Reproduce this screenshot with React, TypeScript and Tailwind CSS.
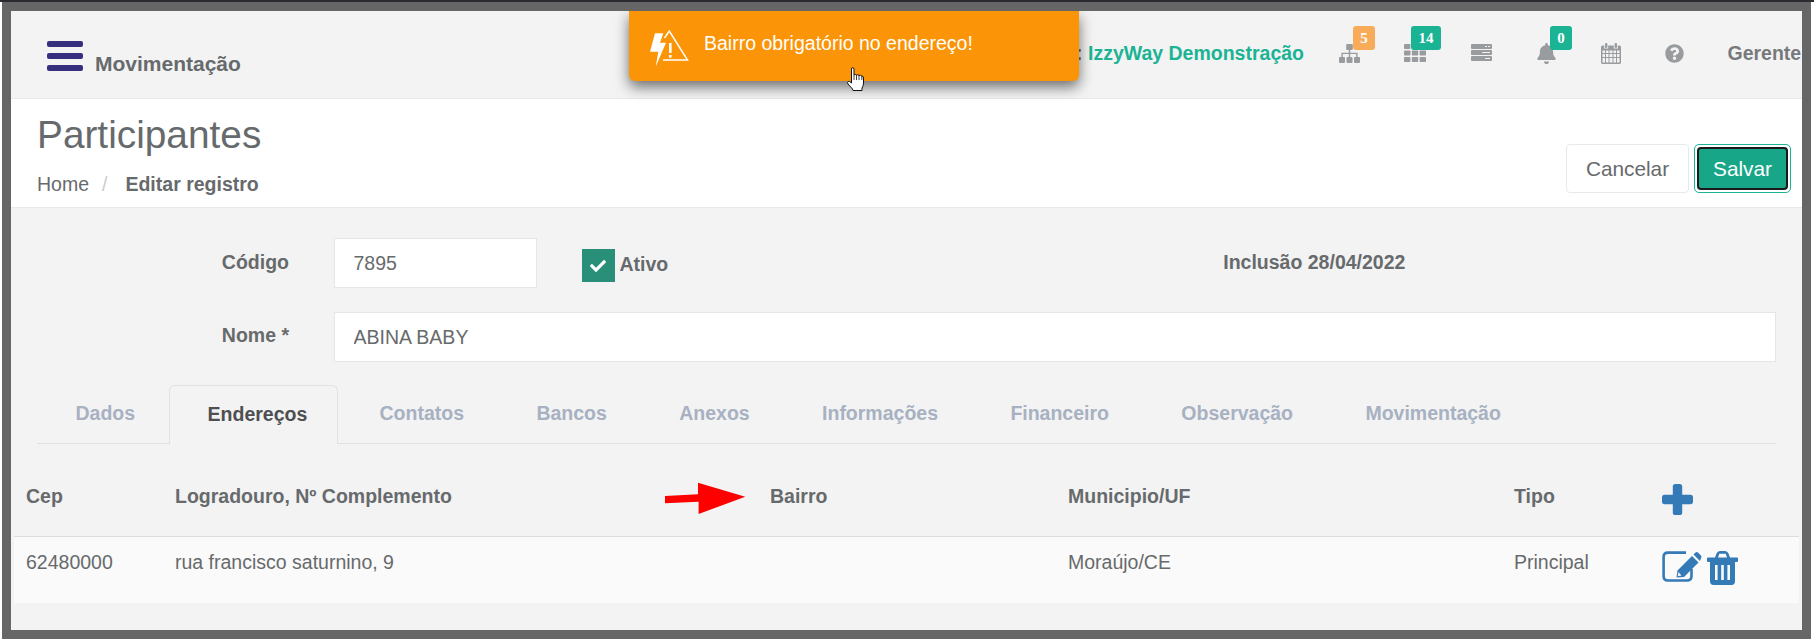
import React from "react";
import { FaBell, FaQuestionCircle } from "react-icons/fa";
import { FaCheck } from "react-icons/fa";

const Sitemap = () => (
  <svg width="21" height="19" viewBox="0 0 21 19" fill="#999c9e">
    <rect x="7.2" y="0" width="6.6" height="6" rx="1" />
    <rect x="9.8" y="6" width="1.4" height="7" />
    <path d="M2.4 13V8.7h16.2V13h-1.4V10H3.8v3z" />
    <rect x="0" y="13" width="6" height="6" rx="1" />
    <rect x="7.5" y="13" width="6" height="6" rx="1" />
    <rect x="15" y="13" width="6" height="6" rx="1" />
  </svg>
);

const Grid = () => (
  <svg width="22" height="18" viewBox="0 0 22 18" fill="#999c9e">
    {[0, 6.5, 13].map((y) =>
      [0, 7.8, 15.6].map((x) => <rect key={`${x}-${y}`} x={x} y={y} width="6.4" height="5" rx="0.8" />)
    )}
  </svg>
);

const Server = () => (
  <svg width="21" height="17" viewBox="0 0 21 17" fill="#999c9e">
    <path fillRule="evenodd" d="M0 1a1 1 0 0 1 1-1h19a1 1 0 0 1 1 1v3a1 1 0 0 1-1 1H1a1 1 0 0 1-1-1zm14 1v1h2V2zm3 0v1h2V2z" />
    <path fillRule="evenodd" d="M0 7a1 1 0 0 1 1-1h19a1 1 0 0 1 1 1v3a1 1 0 0 1-1 1H1a1 1 0 0 1-1-1zm11 1v1h8V8z" />
    <path fillRule="evenodd" d="M0 13a1 1 0 0 1 1-1h19a1 1 0 0 1 1 1v3a1 1 0 0 1-1 1H1a1 1 0 0 1-1-1zm14 1v1h5v-1z" />
  </svg>
);

const Calendar = () => (
  <svg width="20" height="21" viewBox="0 0 20 21" fill="#999c9e">
    <rect x="4" y="0" width="2.4" height="5" rx="1" />
    <rect x="13.6" y="0" width="2.4" height="5" rx="1" />
    <path
      fillRule="evenodd"
      d="M1.5 2.5H3.2V5.5H7.2V2.5H12.8V5.5H16.8V2.5H18.5A1.5 1.5 0 0 1 20 4V19.5A1.5 1.5 0 0 1 18.5 21H1.5A1.5 1.5 0 0 1 0 19.5V4A1.5 1.5 0 0 1 1.5 2.5ZM1.5 7.5V10H4V7.5ZM5 7.5V10H7.5V7.5ZM8.5 7.5V10H11.5V7.5ZM12.5 7.5V10H15V7.5ZM16 7.5V10H18.5V7.5ZM1.5 11V14H4V11ZM5 11V14H7.5V11ZM8.5 11V14H11.5V11ZM12.5 11V14H15V11ZM16 11V14H18.5V11ZM1.5 15V19.5H4V15ZM5 15V19.5H7.5V15ZM8.5 15V19.5H11.5V15ZM12.5 15V19.5H15V15ZM16 15V19.5H18.5V15Z"
    />
  </svg>
);

const Plus = () => (
  <svg width="31" height="31" viewBox="0 0 31 31" fill="#337ab7">
    <rect x="0" y="10.8" width="31" height="9.4" rx="2.6" />
    <rect x="10.8" y="0" width="9.4" height="31" rx="2.6" />
  </svg>
);

const Edit = () => (
  <svg width="40" height="31" viewBox="0 0 40 31" fill="#337ab7">
    <path d="M24 1.6H6Q1.6 1.6 1.6 6V25Q1.6 29.5 6 29.5H25Q29.5 29.5 29.5 25V18" fill="none" stroke="#337ab7" strokeWidth="2.6" />
    <polygon points="14.5,26.5 15.5,19.5 30,5 36.5,11.5 22,26" />
    <path d="M31.5 3.5L33.5 1.5Q35 .5 36 1.5L39 4.5Q40 5.5 39 7L38 10Z" />
    <polygon points="16.5,21 19.4,24.4 15.8,25.2" fill="#fafafa" />
  </svg>
);

const Trash = () => (
  <svg width="31" height="34" viewBox="0 0 31 34" fill="#337ab7">
    <path
      fillRule="evenodd"
      d="M8 6.5 L9.5 2.5 Q10.5 0 13 0 H18 Q20.5 0 21.5 2.5 L23 6.5 H30 Q31 6.5 31 7.5 V10 Q31 11 30 11 H28 V30 Q28 34 24.5 34 H6.5 Q3 34 3 30 V11 H1 Q0 11 0 10 V7.5 Q0 6.5 1 6.5 Z M11 6.5 H20 L18.7 2.8 H12.3 Z M8 14 V29 H10.6 V14 Z M14.2 14 V29 H16.8 V14 Z M20.4 14 V29 H23 V14 Z"
    />
  </svg>
);

const Badge = ({ text, left, color, width }: { text: string; left: string; color: string; width: string }) => (
  <span
    className={`absolute top-[15px] ${left} ${width} ${color} flex h-6 items-center justify-center rounded-[3px] font-['Liberation_Serif',serif] text-[15px] font-bold text-white`}
  >
    {text}
  </span>
);

const tabs = ["Dados", "Endereços", "Contatos", "Bancos", "Anexos", "Informações", "Financeiro", "Observação", "Movimentação"];

export default function App() {
  return (
    <div className="flex h-[639px] w-[1814px] flex-col overflow-hidden bg-white pl-[2px] pr-[3px] font-['Liberation_Sans',Arial,sans-serif] text-[19.5px] text-[#676a6c]">
      <div className="-ml-[2px] -mr-[3px] h-[2px] flex-none bg-[#2a2a2f]" />
      <div className="relative flex-1 overflow-hidden border-[9px] border-[#666666] bg-[#f3f3f3]">
        {/* top bar */}
        <header className="flex h-[88px] items-start border-b border-[#e7eaec] bg-[#f3f3f3]">
          <div className="flex w-[1050px] flex-none items-end pl-9 pt-[30px]">
            <div className="flex flex-col gap-[6px]">
              <span className="h-[6px] w-9 rounded-[2px] bg-[#352f7e]" />
              <span className="h-[6px] w-9 rounded-[2px] bg-[#352f7e]" />
              <span className="h-[6px] w-9 rounded-[2px] bg-[#352f7e]" />
            </div>
            <span className="-mb-[4px] ml-3 text-[21px] font-bold leading-[22px] text-[#676a6c]">Movimentação</span>
          </div>
          <div className="w-[243px] flex-none whitespace-nowrap pt-[31px] text-right font-bold leading-[22px] text-[#1ab394]">
            <span className="text-[#676a6c]">: </span>IzzyWay Demonstração
          </div>
          <div className="relative ml-[13px] flex h-[87px] w-[65.5px] flex-none justify-center pt-[33px]">
            <Sitemap />
            <Badge text="5" left="left-[36px]" width="w-[22px]" color="bg-[#f8ac59]" />
          </div>
          <div className="relative flex h-[87px] w-[65.5px] flex-none justify-center pt-[33px]">
            <Grid />
            <Badge text="14" left="left-[28.5px]" width="w-[30px]" color="bg-[#1ab394]" />
          </div>
          <div className="flex h-[87px] w-[66.5px] flex-none justify-center pt-[33px]">
            <Server />
          </div>
          <div className="relative flex h-[87px] w-[64.5px] flex-none justify-center pt-[32px]">
            <FaBell size={21} color="#999c9e" />
            <Badge text="0" left="left-[35.5px]" width="w-[22px]" color="bg-[#1ab394]" />
          </div>
          <div className="flex h-[87px] w-[64.5px] flex-none justify-center pt-[32px]">
            <Calendar />
          </div>
          <div className="flex h-[87px] w-[61px] flex-none justify-center pt-[33px]">
            <FaQuestionCircle size={19} color="#999c9e" />
          </div>
          <div className="flex-none whitespace-nowrap pl-[23px] pt-[31px] font-bold leading-[22px] text-[#777a7c]">Gerente</div>
        </header>

        {/* page heading */}
        <section className="flex h-[109px] justify-between border-b border-[#e7eaec] bg-white pl-[26px] pr-[11px]">
          <div>
            <h1 className="pt-[13px] text-[38.8px] font-normal leading-[46px]">Participantes</h1>
            <nav className="flex pt-[14px] leading-[24px]">
              <span>Home</span>
              <span className="px-[13px] text-[#c9ccd0]">/</span>
              <strong className="pl-[5px] font-bold">Editar registro</strong>
            </nav>
          </div>
          <div className="flex gap-[5px] pt-[45px]">
            <button className="h-[49px] w-[123px] rounded-[4px] border border-[#e7eaec] bg-white text-[20.8px] text-[#676a6c]">Cancelar</button>
            <button className="h-[49px] w-[97px] rounded-[5px] border border-[#1ab394] bg-white p-[2px]">
              <span className="flex h-full w-full items-center justify-center rounded-[4px] border-2 border-[#1a1a1a] bg-[#18a689] text-[20.8px] text-white">
                Salvar
              </span>
            </button>
          </div>
        </section>

        {/* form */}
        <section className="pt-[30px]">
          <div className="flex items-start">
            <label className="w-[278px] flex-none pt-[10px] text-right font-bold leading-[28px]">Código</label>
            <input
              readOnly
              value="7895"
              className="ml-[44.5px] h-[50px] w-[203px] flex-none border border-[#e5e6e7] bg-white pl-[19px] text-[#676a6c] outline-none"
            />
            <div className="ml-[45px] mt-[11px] flex h-[33px] w-[33px] flex-none items-center justify-center bg-[#2a8f78]">
              <FaCheck size={16} color="#ffffff" />
            </div>
            <span className="ml-[5px] pt-3 font-bold leading-[28px]">Ativo</span>
            <strong className="ml-[555px] whitespace-nowrap pt-[10px] leading-[28px]">Inclusão 28/04/2022</strong>
          </div>
          <div className="mt-[24px] flex items-start">
            <label className="w-[278px] flex-none pt-[9px] text-right font-bold leading-[28px]">Nome *</label>
            <input
              readOnly
              value="ABINA BABY"
              className="ml-[44.5px] h-[50px] w-[1442.5px] flex-none border border-[#e5e6e7] bg-white pl-[19px] text-[#676a6c] outline-none"
            />
          </div>
        </section>

        {/* tabs */}
        <div className="ml-[26px] mr-[26px] mt-[23px] flex h-[59px] border-b border-[#dfe1e4]">
          {tabs.map((t) =>
            t === "Endereços" ? (
              <div
                key={t}
                className="-mb-px mr-[5px] flex h-[59px] items-center rounded-t-[6px] border border-b-0 border-[#dfe1e4] bg-[#f3f3f3] pb-px pl-[38px] pr-[30px] font-bold text-[#4d4f51]"
              >
                {t}
              </div>
            ) : (
              <div
                key={t}
                className={
                  t === "Dados"
                    ? "flex h-[58px] items-center pb-px pl-[38.5px] pr-[33.5px] font-bold text-[#a7b1c2]"
                    : "flex h-[58px] items-center px-[36.2px] pb-px font-bold text-[#a7b1c2]"
                }
              >
                {t}
              </div>
            )
          )}
        </div>

        {/* table */}
        <div className="ml-[3px] w-[1785px]">
          <div className="grid h-[93px] grid-cols-[149px_595px_298px_446px_148px_149px] border-b border-[#dddddd] font-bold">
            <div className="pl-3 pt-[40px] leading-6">Cep</div>
            <div className="pl-3 pt-[40px] leading-6">Logradouro, Nº Complemento</div>
            <div className="relative pl-3 pt-[40px] leading-6">
              <svg className="absolute left-[-93px] top-[38px]" width="81" height="33" viewBox="0 0 81 33" fill="#ff0000">
                <polygon points="0,14 33,12.3 33,0.7 80.3,14.7 33.6,32 33.6,19.7 0,21.3" />
              </svg>
              Bairro
            </div>
            <div className="pl-3 pt-[40px] leading-6">Municipio/UF</div>
            <div className="pl-3 pt-[40px] leading-6">Tipo</div>
            <div className="pl-3 pt-[40px]">
              <Plus />
            </div>
          </div>
          <div className="grid h-[66px] grid-cols-[149px_595px_298px_446px_148px_149px] bg-[#fafafa]">
            <div className="pl-3 pt-[13px] leading-6">62480000</div>
            <div className="pl-3 pt-[13px] leading-6">rua francisco saturnino, 9</div>
            <div />
            <div className="pl-3 pt-[13px] leading-6">Moraújo/CE</div>
            <div className="pl-3 pt-[13px] leading-6">Principal</div>
            <div className="flex items-start gap-[5px] pl-3 pt-[14px]">
              <Edit />
              <Trash />
            </div>
          </div>
        </div>

        {/* toast */}
        <div className="absolute left-[618px] top-0 flex h-[70px] w-[450px] items-start rounded-b-[6px] bg-[#fb9406] pl-5 text-white shadow-[0_6px_14px_rgba(0,0,0,0.55)]">
          <svg className="mt-[19px]" width="40" height="38" viewBox="0 0 40 38" fill="#ffffff">
            <polygon points="6,3.3 14.3,3.3 11,12.7 17,12.7 6.7,36.7 9.3,21.7 1,21.7" />
            <path d="M15.5 8 L20.3 1 L38.5 30 H14" fill="none" stroke="#ffffff" strokeWidth="1.5" />
            <rect x="20" y="13" width="2.6" height="10" />
            <rect x="20" y="25" width="2.6" height="2.6" />
          </svg>
          <span className="ml-[15px] mt-[20px] whitespace-nowrap leading-6">Bairro obrigatório no endereço!</span>
          <svg className="absolute left-[218px] top-[56px]" width="18" height="25" viewBox="0 0 18 25">
            <path
              d="M4.5 13V2Q4.5.7 5.7.7 7 .7 7 2V8Q8.5 7 9.5 8 11 7.2 12 8.5 13.7 7.8 14.8 9 16.5 9 16.5 11V16Q16.5 19 15 21V23.5H6L5.5 22 1 17Q0 15.5 1.2 14.5 2.5 13.8 4.5 16Z"
              fill="#ffffff"
              stroke="#111111"
              strokeWidth="1"
            />
            <path d="M7 8V13M9.5 8V13M12 8.5V13M14.8 9V13" stroke="#111111" strokeWidth="0.8" fill="none" />
          </svg>
        </div>
      </div>
    </div>
  );
}
